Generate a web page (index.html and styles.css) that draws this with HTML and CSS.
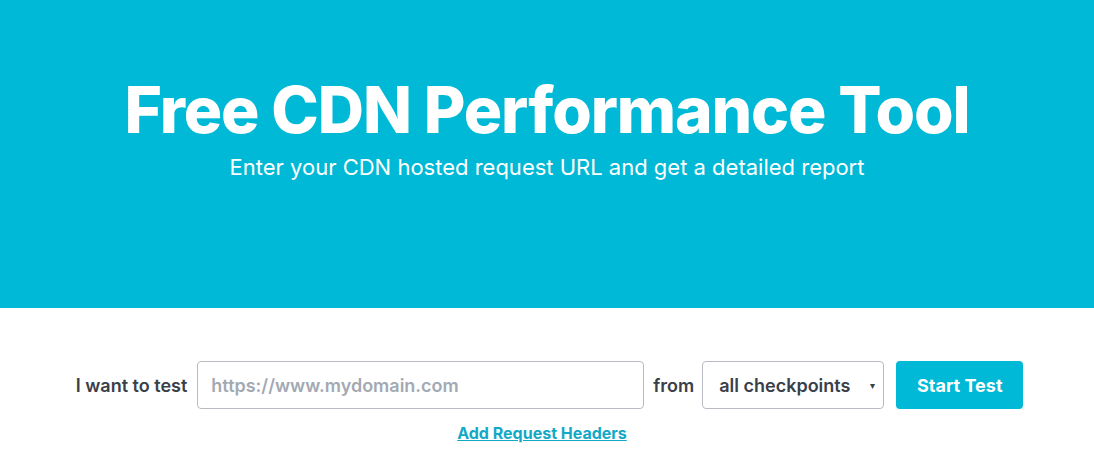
FILE: index.html
```html
<!DOCTYPE html>
<html>
<head>
<meta charset="utf-8">
<link rel="stylesheet" href="styles.css">
</head>
<body>
<header class="hero">
  <h1 class="hero-title">Free CDN Performance Tool</h1>
  <p class="hero-sub">Enter your CDN hosted request URL and get a detailed report</p>
</header>
<main class="form-area">
  <form class="test-form">
    <label class="form-label">I want to test</label>
    <input class="url-input" type="text" placeholder="https://www.mydomain.com">
    <span class="form-label">from</span>
    <div class="select-box">
      <span class="select-text">all checkpoints</span>
      <span class="select-caret">&#9662;</span>
    </div>
    <button class="start-btn" type="button">Start Test</button>
  </form>
  <a class="add-headers" href="#">Add Request Headers</a>
</main>
</body>
</html>
```
FILE: styles.css
```css
* { box-sizing: border-box; }
html, body { margin: 0; padding: 0; background: #fff; }
body { font-family: Inter, "Noto Sans", sans-serif; }

.hero {
  background: #00b9d6;
  height: 308px;
  display: flex;
  flex-direction: column;
  align-items: center;
  padding-top: 72px;
}
.hero-title {
  margin: 0;
  color: #fff;
  font-size: 64px;
  font-weight: 800;
  line-height: 76px;
  letter-spacing: -1.1px;
}
.hero-sub {
  margin: 4px 0 0;
  color: #fff;
  font-size: 22px;
  font-weight: 400;
  line-height: 30px;
}

.form-area {
  display: flex;
  flex-direction: column;
  align-items: center;
  padding-top: 53px;
}
.test-form {
  display: flex;
  align-items: center;
  margin-left: 5px;
}
.form-label {
  font-size: 18px;
  font-weight: 600;
  color: #3a4049;
}
.url-input {
  width: 447px;
  height: 48px;
  margin: 0 9px 0 10px;
  border: 1px solid #b8bcc2;
  border-radius: 4px;
  padding: 0 13px;
  font-family: Inter, "Noto Sans", sans-serif;
  font-size: 18px;
  font-weight: 600;
  color: #3a4049;
}
.url-input::placeholder { color: #a3a9b2; }
.select-box {
  width: 182px;
  height: 48px;
  margin: 0 12px 0 8px;
  border: 1px solid #b8bcc2;
  border-radius: 4px;
  display: flex;
  align-items: center;
  justify-content: space-between;
  padding: 0 8px 0 16px;
}
.select-text {
  font-size: 18px;
  font-weight: 600;
  color: #3a4049;
}
.select-caret {
  font-size: 10px;
  color: #3a4049;
}
.start-btn {
  width: 127px;
  height: 48px;
  border: none;
  border-radius: 4px;
  background: #00b9d6;
  color: #fff;
  font-family: Inter, "Noto Sans", sans-serif;
  font-size: 18px;
  font-weight: 700;
}
.add-headers {
  margin-top: 14px;
  margin-left: -10px;
  color: #13a9c6;
  font-size: 16px;
  font-weight: 700;
  text-decoration: underline;
}
```
